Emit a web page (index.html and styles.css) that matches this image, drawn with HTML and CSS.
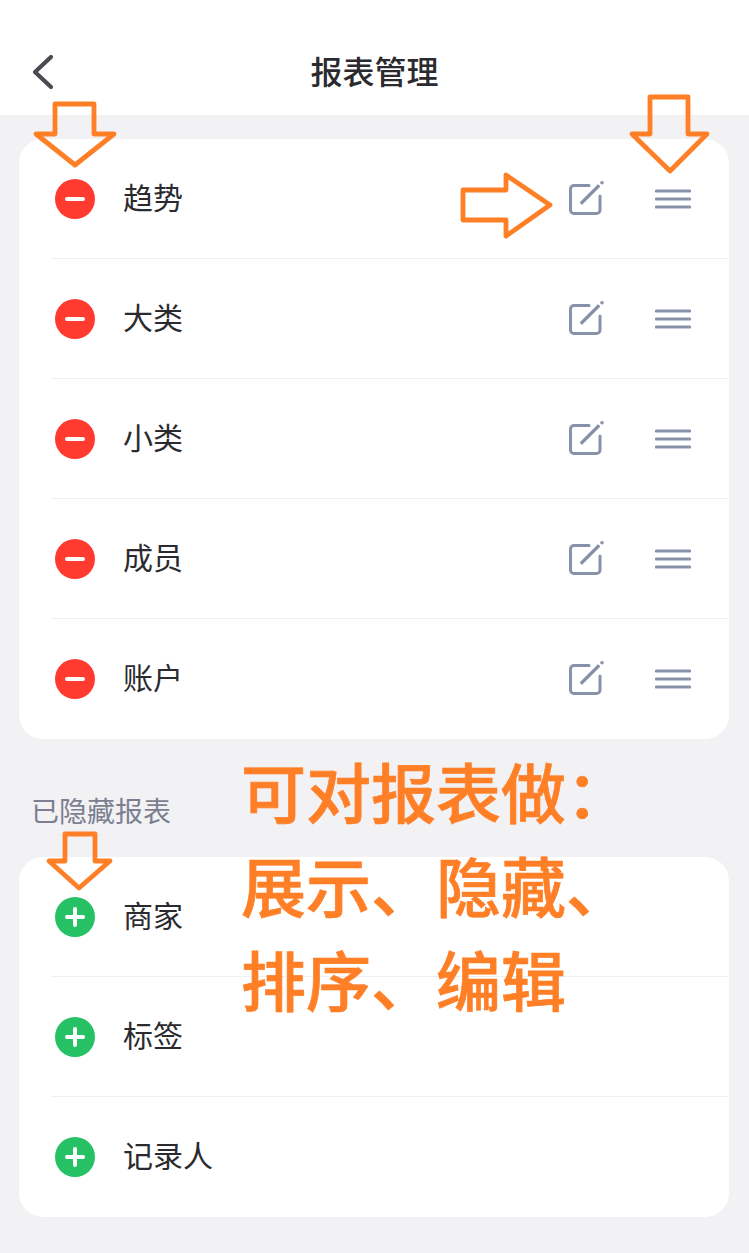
FILE: index.html
```html
<!DOCTYPE html>
<html lang="zh-CN">
<head>
    <meta charset="UTF-8">
    <meta name="viewport" content="width=device-width, initial-scale=1.0">
    <title>报表管理</title>
    <link rel="stylesheet" href="styles.css">
</head>
<body>
    <svg class="defs" width="0" height="0">
        <symbol id="edit" viewBox="0 0 36 36">
            <path d="M21 4.500H6a3.500 3.500 0 0 0-3.500 3.500v21A3.500 3.500 0 0 0 6 32.500h22.500a3.500 3.500 0 0 0 3.500-3.500V15" fill="none" stroke="currentColor" stroke-width="3" stroke-linecap="round"/>
            <path d="M12.500 21.500L30 4L31.500 5.500L14 23Z" fill="currentColor" stroke="currentColor" stroke-width="1.200" stroke-linejoin="round"/>
            <circle cx="34" cy="1.800" r="1.800" fill="currentColor"/>
        </symbol>
        <symbol id="drag" viewBox="0 0 36 20">
            <path d="M1.500 2H34.500M1.500 10H34.500M1.500 18H34.500" fill="none" stroke="currentColor" stroke-width="3.200" stroke-linecap="round"/>
        </symbol>
    </svg>

    <header class="topbar">
        <svg class="back" width="24" height="36" viewBox="0 0 24 36">
            <path d="M20 3L4 18L20 33" fill="none" stroke="#4a4a52" stroke-width="4.200" stroke-linecap="round" stroke-linejoin="round"/>
        </svg>
        <h1 class="title">报表管理</h1>
    </header>

    <main class="content">
        <ul class="card">
            <li class="row">
                <span class="badge remove"></span>
                <span class="name">趋势</span>
                <svg class="edit"><use href="#edit"/></svg>
                <svg class="drag"><use href="#drag"/></svg>
            </li>
            <li class="row">
                <span class="badge remove"></span>
                <span class="name">大类</span>
                <svg class="edit"><use href="#edit"/></svg>
                <svg class="drag"><use href="#drag"/></svg>
            </li>
            <li class="row">
                <span class="badge remove"></span>
                <span class="name">小类</span>
                <svg class="edit"><use href="#edit"/></svg>
                <svg class="drag"><use href="#drag"/></svg>
            </li>
            <li class="row">
                <span class="badge remove"></span>
                <span class="name">成员</span>
                <svg class="edit"><use href="#edit"/></svg>
                <svg class="drag"><use href="#drag"/></svg>
            </li>
            <li class="row">
                <span class="badge remove"></span>
                <span class="name">账户</span>
                <svg class="edit"><use href="#edit"/></svg>
                <svg class="drag"><use href="#drag"/></svg>
            </li>
        </ul>

        <h2 class="section-label">已隐藏报表</h2>

        <ul class="card">
            <li class="row">
                <span class="badge add"></span>
                <span class="name">商家</span>
            </li>
            <li class="row">
                <span class="badge add"></span>
                <span class="name">标签</span>
            </li>
            <li class="row">
                <span class="badge add"></span>
                <span class="name">记录人</span>
            </li>
        </ul>
    </main>

    <!-- annotations drawn over the screenshot -->
    <svg class="arrows" width="749" height="1253" viewBox="0 0 749 1253">
        <path d="M55 104H94V134H114L75 165L36 134H55Z"/>
        <path d="M650 97H688V134H707L670 171L632 134H650Z"/>
        <path d="M463 190H506V175L550 205L506 236V220H463Z"/>
        <path d="M65 834H95V861H110L79 888L49 861H65Z"/>
    </svg>
    <p class="note">可对报表做：<br>展示、隐藏、<br>排序、编辑</p>
</body>
</html>
```

FILE: styles.css
```css
* {
    box-sizing: border-box;
}
html, body {
    margin: 0;
    padding: 0;
}
body {
    position: relative;
    width: 749px;
    height: 1253px;
    overflow: hidden;
    background-color: #f2f2f5;
    font-family: "Noto Sans CJK SC", "Noto Sans", sans-serif;
    color: #2b2b2f;
}
.defs {
    position: absolute;
}
.topbar {
    display: flex;
    align-items: center;
    justify-content: center;
    position: relative;
    height: 115px;
    padding-top: 25px;
    background-color: #fff;
}
.back {
    position: absolute;
    left: 31px;
    top: 54px;
}
.title {
    margin: 0;
    font-size: 32px;
    font-weight: 500;
    line-height: 44px;
}
.content {
    padding: 24px 20px 0 19px;
}
.card {
    margin: 0;
    padding: 0;
    list-style: none;
    background-color: #fff;
    border-radius: 24px;
    overflow: hidden;
}
.row {
    display: flex;
    align-items: center;
    position: relative;
    height: 120px;
    padding: 0 38px 0 36px;
}
.row + .row::before {
    content: "";
    position: absolute;
    top: -1px;
    left: 32px;
    right: 0;
    height: 1px;
    background-color: #efeff1;
}
.badge {
    position: relative;
    flex: none;
    width: 40px;
    height: 40px;
    margin-right: 28px;
    border-radius: 50%;
}
.badge::before,
.badge::after {
    content: "";
    position: absolute;
    background-color: #fff;
    border-radius: 2px;
}
.badge::before {
    left: 10px;
    top: 18px;
    width: 20px;
    height: 4px;
}
.remove {
    background-color: #ff3b30;
}
.remove::after {
    display: none;
}
.add {
    background-color: #26c165;
}
.add::after {
    left: 18px;
    top: 10px;
    width: 4px;
    height: 20px;
}
.name {
    flex: 1;
    padding-bottom: 6px;
    font-size: 30px;
    line-height: 40px;
}
.edit {
    flex: none;
    width: 36px;
    height: 36px;
    margin-right: 51px;
    color: #8791a9;
}
.drag {
    flex: none;
    width: 36px;
    height: 20px;
    color: #8791a9;
}
.section-label {
    margin: 0;
    padding: 51px 0 27px 13px;
    font-size: 28px;
    font-weight: 400;
    line-height: 40px;
    color: #7c7f90;
    transform: translateX(-1px);
}
.arrows {
    position: absolute;
    left: 0;
    top: 0;
    fill: none;
    stroke: #ff7f27;
    stroke-width: 4.800;
    stroke-linejoin: round;
}
.note {
    position: absolute;
    left: 241px;
    top: 743px;
    margin: 0;
    font-size: 65px;
    font-weight: 500;
    line-height: 94px;
    color: #ff7f27;
    -webkit-text-stroke: 0.7px #ff7f27;
    white-space: nowrap;
}
```
